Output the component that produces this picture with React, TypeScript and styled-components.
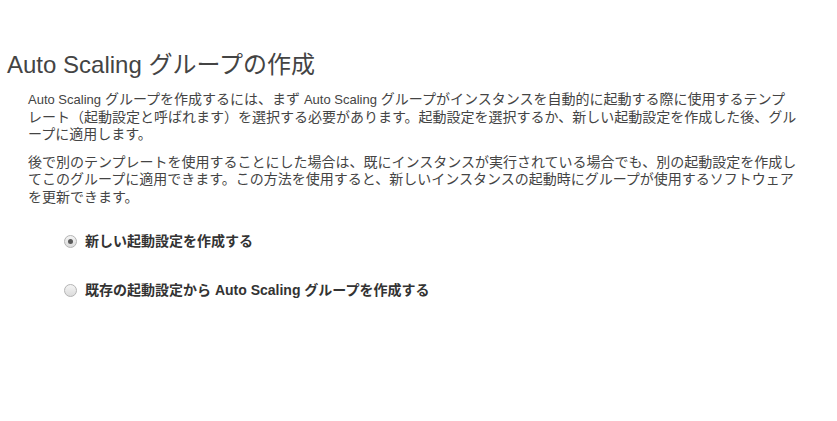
import React from "react";
import styled, { createGlobalStyle } from "styled-components";

const GlobalStyle = createGlobalStyle`
  html, body {
    margin: 0;
    padding: 0;
    background: #ffffff;
  }
  body {
    font-family: "Liberation Sans", Arial, "Noto Sans CJK JP", sans-serif;
    color: #444444;
  }
`;

const Page = styled.div`
  padding: 50px 0 0 7px;
`;

const Title = styled.h1`
  margin: 0;
  font-size: 24px;
  line-height: 30px;
  font-weight: 400;
  color: #444444;
`;

const Body = styled.div`
  margin: 11px 0 0 21px;
  width: 771px;
`;

const Para = styled.p`
  margin: 0 0 10px 0;
  font-size: 14px;
  line-height: 17.5px;
  color: #444444;
`;

const Latin = styled.span`
  font-size: 13px;
`;

const Options = styled.div`
  display: flex;
  flex-direction: column;
  gap: 31px;
  margin: 26px 0 0 57px;
`;

const Option = styled.label`
  display: flex;
  align-items: center;
  gap: 8px;
  font-size: 14px;
  line-height: 18px;
  font-weight: 700;
  color: #333333;
  cursor: pointer;
`;

const Radio = styled.span<{ $checked?: boolean }>`
  position: relative;
  width: 11px;
  height: 11px;
  border-radius: 50%;
  border: 1px solid #b4b4b4;
  background: linear-gradient(#f4f4f4, #dcdcdc);
  flex: none;
  &::after {
    content: "";
    display: ${(p) => (p.$checked ? "block" : "none")};
    position: absolute;
    left: 3px;
    top: 3px;
    width: 5px;
    height: 5px;
    border-radius: 50%;
    background: #5a5a5a;
  }
`;

export default function App() {
  return (
    <>
      <GlobalStyle />
      <Page>
        <Title>Auto Scaling グループの作成</Title>
        <Body>
          <Para>
            <Latin>Auto Scaling</Latin> グループを作成するには、まず <Latin>Auto Scaling</Latin> グループがインスタンスを自動的に起動する際に使用するテンプレート（起動設定と呼ばれます）を選択する必要があります。起動設定を選択するか、新しい起動設定を作成した後、グループに適用します。
          </Para>
          <Para>
            後で別のテンプレートを使用することにした場合は、既にインスタンスが実行されている場合でも、別の起動設定を作成してこのグループに適用できます。この方法を使用すると、新しいインスタンスの起動時にグループが使用するソフトウェアを更新できます。
          </Para>
        </Body>
        <Options>
          <Option>
            <Radio $checked />
            新しい起動設定を作成する
          </Option>
          <Option>
            <Radio />
            既存の起動設定から Auto Scaling グループを作成する
          </Option>
        </Options>
      </Page>
    </>
  );
}
